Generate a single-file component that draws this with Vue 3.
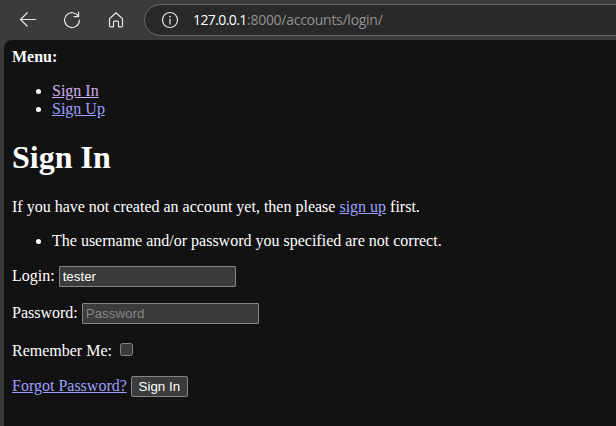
<script setup>
import { ref } from 'vue'

const login = ref('tester')
const password = ref('')
const remember = ref(false)
</script>

<template>
  <div class="window">
    <header class="toolbar">
      <svg class="icon back" viewBox="0 0 18 18" width="18" height="18">
        <path d="M16.5 8.5H1.5M8.3 1.8L1.5 8.5L8.3 15.2" />
      </svg>
      <svg class="icon reload" viewBox="0 0 18 18" width="18" height="18">
        <path d="M15.4 5.4A7.4 7.4 0 1 0 16.4 9.2M15.6 1.2V5.6H11" />
      </svg>
      <svg class="icon home" viewBox="0 0 18 18" width="18" height="18">
        <path d="M2.5 7.8L9 1.8L15.5 7.8V14.8Q15.5 15.8 14.5 15.8H11.5V11.2Q11.5 10.2 10.5 10.2H7.5Q6.5 10.2 6.5 11.2V15.8H3.5Q2.5 15.8 2.5 14.8Z" />
      </svg>
      <div class="address">
        <svg class="icon info" viewBox="0 0 18 18" width="18" height="18">
          <circle cx="9" cy="9" r="7.5" />
          <path d="M9 8V13" />
          <circle class="dot" cx="9" cy="5.6" r="0.9" />
        </svg>
        <span class="host">127.0.0.1</span><span class="path">:8000/accounts/login/</span>
      </div>
    </header>
    <main class="page">
      <div><strong>Menu:</strong></div>
      <ul>
        <li><a class="visited" href="#">Sign In</a></li>
        <li><a href="#">Sign Up</a></li>
      </ul>
      <h1>Sign In</h1>
      <p>If you have not created an account yet, then please <a href="#">sign up</a> first.</p>
      <form @submit.prevent>
        <ul>
          <li>The username and/or password you specified are not correct.</li>
        </ul>
        <p><label for="login">Login:</label> <input id="login" v-model="login" class="field" type="text" /></p>
        <p><label for="password">Password:</label> <input id="password" v-model="password" class="field" type="password" placeholder="Password" /></p>
        <p><label for="remember">Remember Me:</label> <input id="remember" v-model="remember" class="check" type="checkbox" /></p>
        <a href="#">Forgot Password?</a> <button type="submit">Sign In</button>
      </form>
    </main>
  </div>
</template>

<style>
body {
  background: #3b3b3b;
  overflow: hidden;
}
</style>

<style scoped>
.window {
  display: flex;
  flex-direction: column;
  height: 426px;
  overflow: hidden;
  background: #3b3b3b;
}
.toolbar {
  display: flex;
  align-items: center;
  flex: none;
  box-sizing: border-box;
  height: 40px;
  padding-left: 19px;
}
.icon {
  flex: none;
  fill: none;
  stroke: #e4e4e4;
  stroke-width: 1.2;
  stroke-linecap: round;
  stroke-linejoin: round;
}
.reload {
  margin-left: 26px;
}
.home {
  margin-left: 26px;
}
.address {
  display: flex;
  align-items: center;
  flex: 1;
  box-sizing: border-box;
  height: 32px;
  margin-left: 19px;
  margin-right: -20px;
  padding-left: 16px;
  border: 1px solid #686868;
  border-radius: 16px;
  background: #292929;
  font: 14px/20px "Open Sans", sans-serif;
  white-space: pre;
}
.info .dot {
  fill: #e4e4e4;
  stroke: none;
}
.host {
  width: 54px;
  margin-left: 14px;
  color: #fff;
  font-weight: 500;
  letter-spacing: -0.6px;
}
.path {
  color: #929292;
  letter-spacing: -0.27px;
}
.page {
  flex: 1;
  margin-left: 4px;
  padding: 8px;
  border-radius: 8px 0 0 0;
  background: #121212;
  color: #fff;
  font: 16px/18px "Liberation Serif", serif;
}
ul {
  margin: 16px 0;
  padding-left: 40px;
}
h1 {
  margin: 21.44px 0;
  font-size: 32px;
  line-height: 37px;
}
p {
  margin: 16px 0;
}
a {
  color: #9e9eff;
}
a.visited {
  color: #d0adf0;
}
.field,
button {
  box-sizing: border-box;
  height: 21px;
  border: 1px solid #858585;
  border-radius: 2px;
  background: #3b3b3b;
  color: #fff;
  font: 13.333px/15px "Liberation Sans", sans-serif;
}
.field {
  width: 177px;
  margin: 0;
  padding: 1px 3px;
  border-radius: 1px;
}
.field::placeholder {
  color: #858585;
  opacity: 1;
}
.check {
  appearance: none;
  box-sizing: border-box;
  width: 13px;
  height: 13px;
  margin: 3px 3px 0 4px;
  border: 1px solid #858585;
  border-radius: 2.5px;
  background: #3b3b3b;
}
button {
  width: 57px;
  margin: 0;
  padding: 1px 6px;
}
</style>
